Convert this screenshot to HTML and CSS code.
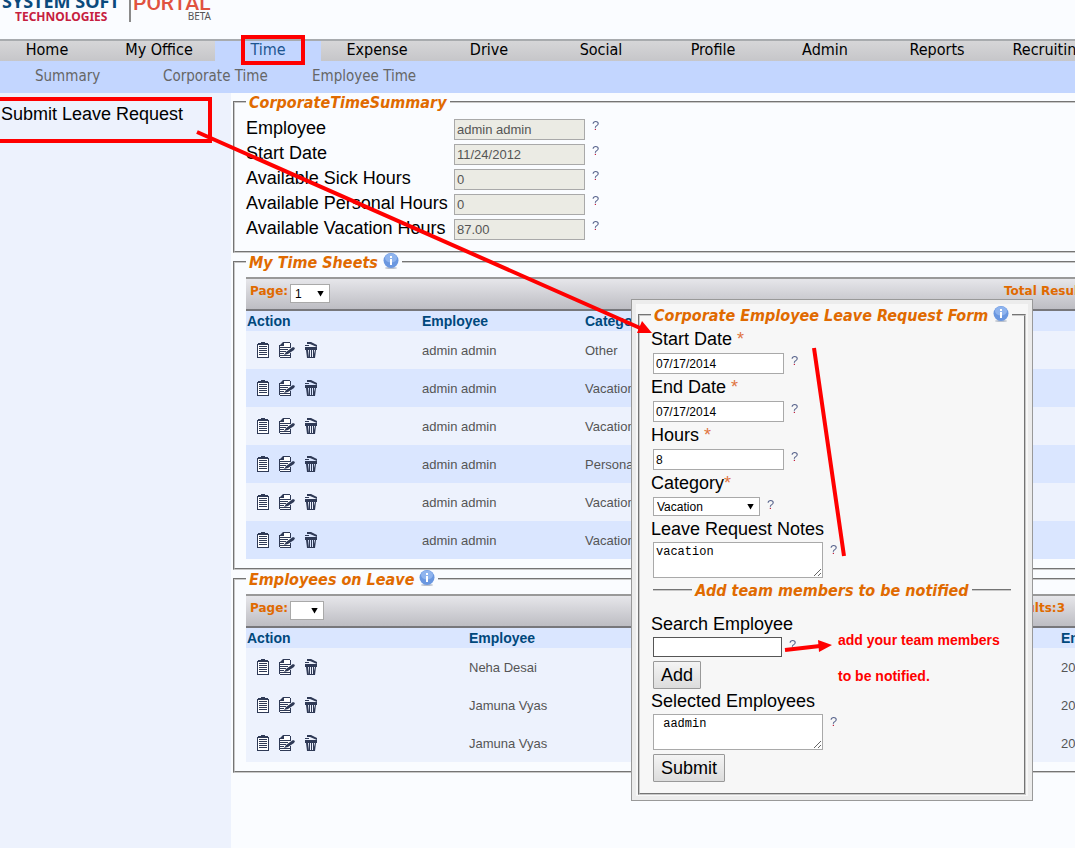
FILE: index.html
```html
<!DOCTYPE html>
<html lang="en">
<head>
<meta charset="utf-8">
<title>System Soft Technologies Portal</title>
<link rel="stylesheet" href="styles.css">
</head>
<body>
<svg class="sprite" aria-hidden="true">
  <symbol id="clip" viewBox="0 0 12 16"><path fill="#fff" d="M1 3h10v12H1z"/><path d="M0 2h1v13H0zM11 2h1v13h-1zM0 15h12v1H0zM1 1h10v2H1zM4 0h4v2H4zM2 4h8v1H2zM2 6h8v1H2zM2 8h8v1H2zM2 10h8v1H2zM2 12h8v1H2z"/></symbol>
  <symbol id="edit" viewBox="0 0 16 16"><path fill="#fff" d="M3 1h8v14H1V4z"/><path d="M4 0h7v1H5v3H0V3h1zM11 1h1v5h-1zM0 5h11v1H0zM0 7h9v1H0zM0 9h7v1H0zM0 11h5v1H0zM0 13h11v1H0zM1 15h11v1H1zM11 11h1v4h-1zM0 3h1v12H0z"/><path d="M5 13l2-3 7-5 2 1-1 2-6 4z"/></symbol>
  <symbol id="trash" viewBox="0 0 12 16"><path d="M2 0h4l6 3v2L5 2H2zM0 5h12v3H0zM0 3h4v1H0zM1 8h2l1 8H2zM4 8h1v7H4zM6 8h1v7H6zM8 8h1v7H8zM10 8h1l-1 8H8zM2 15h8v1H2z"/></symbol>
  <symbol id="info" viewBox="0 0 16 16"><ellipse cx="8" cy="15" rx="6" ry="1" fill="#b9c0cc"/><circle cx="8" cy="7.500" r="7.500" fill="#6a97e0"/><ellipse cx="8" cy="5" rx="6" ry="4.500" fill="#8fb4ee"/><path fill="#fff" d="M7 3h2v2H7zM7 6h2v6H7z"/></symbol>
</svg>
<div class="page">
  <header class="masthead">
    <div class="brand"><span class="brand-name">SYSTEM SOFT</span><span class="brand-sub">TECHNOLOGIES</span></div>
    <div class="portal"><span class="portal-name">PORTAL</span><span class="portal-tag">BETA</span></div>
  </header>
  <nav class="nav">
    <a class="nav-item first" href="#">Home</a>
    <a class="nav-item" href="#">My Office</a>
    <a class="nav-item current" href="#">Time</a>
    <a class="nav-item" href="#">Expense</a>
    <a class="nav-item" href="#">Drive</a>
    <a class="nav-item" href="#">Social</a>
    <a class="nav-item" href="#">Profile</a>
    <a class="nav-item" href="#">Admin</a>
    <a class="nav-item" href="#">Reports</a>
    <a class="nav-item" href="#">Recruiting</a>
  </nav>
  <nav class="subnav"><a href="#">Summary</a><a href="#">Corporate Time</a><a href="#">Employee Time</a></nav>

  <div class="columns">
    <aside class="sidebar"><a href="#">Submit Leave Request</a></aside>
    <main class="content">
      <fieldset class="panel summary">
        <legend>CorporateTimeSummary</legend>
        <div class="row"><label for="emp">Employee</label><input id="emp" type="text" value="admin admin" disabled><span class="help">?</span></div>
        <div class="row"><label for="sd">Start Date</label><input id="sd" type="text" value="11/24/2012" disabled><span class="help">?</span></div>
        <div class="row"><label for="sick">Available Sick Hours</label><input id="sick" type="text" value="0" disabled><span class="help">?</span></div>
        <div class="row"><label for="pers">Available Personal Hours</label><input id="pers" type="text" value="0" disabled><span class="help">?</span></div>
        <div class="row"><label for="vac">Available Vacation Hours</label><input id="vac" type="text" value="87.00" disabled><span class="help">?</span></div>
      </fieldset>

      <fieldset class="panel">
        <legend>My Time Sheets <svg class="info"><use href="#info"/></svg></legend>
        <div class="toolbar"><label for="p1">Page:</label><span class="select pager"><select id="p1"><option>1</option></select></span><span class="total">Total Results:6</span></div>
        <table class="grid sheets">
          <thead><tr><th class="act">Action</th><th class="who">Employee</th><th>Category</th></tr></thead>
          <tbody>
            <tr><td><span class="icons"><button aria-label="View"><svg class="narrow"><use href="#clip"/></svg></button><button aria-label="Edit"><svg class="wide"><use href="#edit"/></svg></button><button aria-label="Delete"><svg class="narrow"><use href="#trash"/></svg></button></span></td><td>admin admin</td><td>Other</td></tr>
            <tr><td><span class="icons"><button aria-label="View"><svg class="narrow"><use href="#clip"/></svg></button><button aria-label="Edit"><svg class="wide"><use href="#edit"/></svg></button><button aria-label="Delete"><svg class="narrow"><use href="#trash"/></svg></button></span></td><td>admin admin</td><td>Vacation</td></tr>
            <tr><td><span class="icons"><button aria-label="View"><svg class="narrow"><use href="#clip"/></svg></button><button aria-label="Edit"><svg class="wide"><use href="#edit"/></svg></button><button aria-label="Delete"><svg class="narrow"><use href="#trash"/></svg></button></span></td><td>admin admin</td><td>Vacation</td></tr>
            <tr><td><span class="icons"><button aria-label="View"><svg class="narrow"><use href="#clip"/></svg></button><button aria-label="Edit"><svg class="wide"><use href="#edit"/></svg></button><button aria-label="Delete"><svg class="narrow"><use href="#trash"/></svg></button></span></td><td>admin admin</td><td>Personal</td></tr>
            <tr><td><span class="icons"><button aria-label="View"><svg class="narrow"><use href="#clip"/></svg></button><button aria-label="Edit"><svg class="wide"><use href="#edit"/></svg></button><button aria-label="Delete"><svg class="narrow"><use href="#trash"/></svg></button></span></td><td>admin admin</td><td>Vacation</td></tr>
            <tr><td><span class="icons"><button aria-label="View"><svg class="narrow"><use href="#clip"/></svg></button><button aria-label="Edit"><svg class="wide"><use href="#edit"/></svg></button><button aria-label="Delete"><svg class="narrow"><use href="#trash"/></svg></button></span></td><td>admin admin</td><td>Vacation</td></tr>
          </tbody>
        </table>
      </fieldset>

      <fieldset class="panel">
        <legend>Employees on Leave <svg class="info"><use href="#info"/></svg></legend>
        <div class="toolbar leave-bar"><label for="p2">Page:</label><span class="select pager small"><select id="p2"><option></option></select></span><span class="total">Total Results:3</span></div>
        <table class="grid leave">
          <thead><tr><th class="act">Action</th><th>Employee</th><th class="end">End</th></tr></thead>
          <tbody>
            <tr><td><span class="icons"><button aria-label="View"><svg class="narrow"><use href="#clip"/></svg></button><button aria-label="Edit"><svg class="wide"><use href="#edit"/></svg></button><button aria-label="Delete"><svg class="narrow"><use href="#trash"/></svg></button></span></td><td>Neha Desai</td><td>2014</td></tr>
            <tr><td><span class="icons"><button aria-label="View"><svg class="narrow"><use href="#clip"/></svg></button><button aria-label="Edit"><svg class="wide"><use href="#edit"/></svg></button><button aria-label="Delete"><svg class="narrow"><use href="#trash"/></svg></button></span></td><td>Jamuna Vyas</td><td>2014</td></tr>
            <tr><td><span class="icons"><button aria-label="View"><svg class="narrow"><use href="#clip"/></svg></button><button aria-label="Edit"><svg class="wide"><use href="#edit"/></svg></button><button aria-label="Delete"><svg class="narrow"><use href="#trash"/></svg></button></span></td><td>Jamuna Vyas</td><td>2014</td></tr>
          </tbody>
        </table>
      </fieldset>
    </main>
  </div>

  <form class="dialog">
    <fieldset class="panel request">
      <legend>Corporate Employee Leave Request Form <svg class="info"><use href="#info"/></svg></legend>
      <label for="f1">Start Date <span class="req">*</span></label>
      <div class="field"><input id="f1" type="text" value="07/17/2014"><span class="help">?</span></div>
      <label for="f2">End Date <span class="req">*</span></label>
      <div class="field"><input id="f2" type="text" value="07/17/2014"><span class="help">?</span></div>
      <label for="f3">Hours <span class="req">*</span></label>
      <div class="field"><input id="f3" type="text" value="8"><span class="help">?</span></div>
      <label for="f4">Category<span class="req">*</span></label>
      <div class="field"><span class="select category"><select id="f4"><option>Vacation</option></select></span><span class="help">?</span></div>
      <label for="f5">Leave Request Notes</label>
      <div class="field tight"><textarea id="f5">vacation</textarea><span class="help">?</span></div>
      <fieldset class="team">
        <legend>Add team members to be notified</legend>
      </fieldset>
      <label for="f6">Search Employee</label>
      <div class="field tight"><input id="f6" class="search" type="text"><span class="help">?</span></div>
      <div class="field tight"><button class="btn" type="button">Add</button></div>
      <label for="f7">Selected Employees</label>
      <div class="field tight"><textarea id="f7"> aadmin</textarea><span class="help">?</span></div>
      <div class="field tight"><button class="btn" type="button">Submit</button></div>
    </fieldset>
  </form>

  <svg class="marks" width="1075" height="848" aria-hidden="true">
    <g fill="none" stroke="#f00" stroke-width="4">
      <rect x="243" y="37" width="60" height="26"/>
      <rect x="-6" y="99" width="216" height="42"/>
      <path d="M197 132L640 328M814 348L844 556M785 650L820 646"/>
    </g>
    <path fill="#f00" d="M652 333L637 333L642 321zM832 645L819 652L818 640z"/>
  </svg>
  <p class="note">add your team members<br>to be notified.</p>
</div>
</body>
</html>
```
FILE: styles.css
```css
* { box-sizing: border-box; }
body {
  margin: 0;
  background: #fafcff;
  color: #000;
  font-family: "Liberation Sans", Arial, sans-serif;
  font-size: 13px;
}
a { color: inherit; text-decoration: none; }
.sprite { display: none; }
.page {
  position: relative;
  display: flex;
  flex-direction: column;
  min-height: 100vh;
  overflow: hidden;
}

/* Masthead */
.masthead {
  display: flex;
  align-items: flex-start;
  height: 39px;
  overflow: hidden;
  font-family: "Noto Sans", sans-serif;
}
.brand, .portal {
  display: flex;
  flex-direction: column;
  flex: none;
  justify-content: flex-end;
  white-space: nowrap;
}
.brand { width: 129px; height: 25px; padding-left: 2px; }
.brand-name { color: #0b4a7c; font-size: 18px; font-weight: bold; line-height: 14px; }
.brand-sub { color: #c6203e; font-size: 12px; font-weight: bold; line-height: 17px; padding-left: 13px; }
.portal { width: 82px; height: 22px; border-left: 2px solid #8a8a8a; padding-left: 2px; }
.portal-name { color: #e0523f; font-family: Roboto, sans-serif; font-size: 21px; font-weight: 500; line-height: 16px; }
.portal-tag { color: #555; font-size: 10px; line-height: 11px; text-align: right; }

/* Navigation */
.nav {
  display: flex;
  height: 22px;
  overflow: hidden;
  border-top: 2px solid #a8abae;
  background: linear-gradient(#d6d6d8, #c6c6c9);
  font-family: "DejaVu Sans Condensed", Tahoma, sans-serif;
  font-size: 16px;
  line-height: 18px;
}
.nav-item { flex: none; width: 112px; height: 20px; text-align: center; }
.nav-item.first { width: 103px; padding-right: 9px; }
.nav-item.current { width: 106px; background: #c3d6ff; color: #1d5590; }
.subnav {
  display: grid;
  grid-template-columns: 128px 149px 1fr;
  height: 32px;
  padding-left: 35px;
  background: #c3d6ff;
  color: #666;
  font-family: "DejaVu Sans Condensed", Tahoma, sans-serif;
  font-size: 15px;
  line-height: 30px;
}

/* Columns */
.columns { display: flex; flex: 1; }
.sidebar {
  flex: none;
  width: 231px;
  padding: 10px 1px;
  background: #edf2fd;
  font-size: 18px;
  line-height: 22px;
}
.content { flex: 1; min-width: 0; padding-left: 2px; overflow: hidden; }

/* Panels */
.panel {
  min-width: 0;
  margin: 0 -20px 0 0;
  padding: 6px 11px 9px;
  border: 2px groove #c8c8c8;
}
.panel legend, .team legend {
  padding: 0 3px;
  color: #e06a00;
  font-family: "DejaVu Sans Condensed", Tahoma, sans-serif;
  font-size: 16px;
  font-style: italic;
  font-weight: bold;
  line-height: 20px;
  height: 18px;
  white-space: nowrap;
}
.info { width: 16px; height: 16px; vertical-align: top; }
.summary { padding: 5px 11px 10px; }
.row {
  display: grid;
  grid-template-columns: 208px 131px 1fr;
  align-items: end;
  height: 25px;
  padding-bottom: 1px;
}
.row label { font-size: 18px; line-height: 24px; }
.help {
  align-self: start;
  margin-left: 7px;
  background: linear-gradient(#55618a 11px, #c6203e 11px);
  background-clip: text;
  color: transparent;
  font-size: 13px;
  line-height: 16px;
}
.row .help { margin-top: 2px; }

input, textarea {
  margin: 0;
  border: 1px solid #a9a9a9;
  border-radius: 0;
  background: #fff;
  color: #000;
}
input {
  width: 131px;
  height: 21px;
  padding: 1px 2px;
  font-family: inherit;
  font-size: 12px;
}
input:disabled { background: #ebebe4; color: #555; font-size: 13px; }

/* Toolbars and tables */
.toolbar {
  display: flex;
  height: 34px;
  padding: 5px 63px 0 4px;
  border-top: 2px solid #999;
  border-bottom: 2px solid #77777b;
  background: linear-gradient(#e6e6ea, #bdbdc3);
  color: #e06a00;
  font-family: "DejaVu Sans", Verdana, sans-serif;
  font-size: 12px;
  font-weight: bold;
  line-height: 15px;
}
.toolbar label { width: 40px; }
.toolbar .total { margin-left: auto; width: 15px; white-space: nowrap; }
.toolbar.leave-bar .total { width: auto; }
.toolbar.leave-bar { padding-right: 17px; }
.select { display: inline-grid; align-items: center; height: 19px; }
.select select {
  grid-area: 1 / 1;
  width: 100%;
  height: 19px;
  margin: 0;
  padding: 0 4px;
  appearance: none;
  border: 1px solid #a9a9a9;
  border-radius: 0;
  background: #fff;
  color: #000;
  font-family: "Liberation Sans", Arial, sans-serif;
  font-size: 12px;
}
.select::after {
  content: "";
  grid-area: 1 / 1;
  justify-self: end;
  z-index: 1;
  width: 7px;
  height: 6px;
  margin-right: 6px;
  background: #000;
  clip-path: polygon(0 0, 100% 0, 50% 100%);
  pointer-events: none;
}
.pager { width: 40px; }
.pager.small { width: 34px; }
.grid { width: 100%; border-collapse: collapse; table-layout: fixed; }
.grid th {
  height: 20px;
  padding: 0 1px;
  background: #dae6ff;
  color: #00487c;
  font-size: 14px;
  line-height: 20px;
  text-align: left;
}
.grid td { height: 38px; padding: 0 1px; background: #edf2fd; color: #555; white-space: nowrap; }
.sheets tbody tr:nth-child(even) td { background: #dae6ff; }
.sheets .act { width: 175px; }
.sheets .who { width: 163px; }
.leave .act { width: 222px; }
.leave .end { width: 22px; }
.icons { display: flex; gap: 10px; padding-left: 10px; }
.icons button { display: block; padding: 0; border: 0; background: none; }
.icons svg { display: block; height: 16px; fill: #2f3a56; }
.narrow { width: 12px; }
.wide { width: 16px; }

/* Leave request dialog */
.dialog {
  position: absolute;
  left: 631px;
  top: 299px;
  width: 402px;
  padding: 6px 6px 5px;
  border: 1px solid #999;
  background: #f7f7f7;
  box-shadow: inset 0 0 0 4px #ececec;
}
.request { margin: 0; padding: 5px 11px 9px; }
.request > label { display: block; font-size: 18px; line-height: 21px; height: 21px; }
.req { color: #e0743f; font-size: 18px; line-height: 18px; }
.field { display: flex; padding: 3px 2px; }
.field.tight { padding: 2px; }
.category { width: 107px; }
.category select { padding: 0 3px; }
.field textarea {
  width: 170px;
  height: 36px;
  padding: 2px;
  font-family: "Liberation Mono", "Courier New", monospace;
  font-size: 12px;
}
.team {
  margin: 1px 2px 15px;
  padding: 0;
  border: 0 solid #777;
  border-top: 2px groove #c8c8c8;
}
.team legend { margin: 0 auto; }
.search { width: 129px; height: 20px; border-color: #555; }
.btn {
  height: 28px;
  padding: 0 7px;
  border: 1px solid #999;
  border-radius: 1px;
  background: linear-gradient(#f4f4f4, #dcdcdc);
  color: #000;
  font-family: inherit;
  font-size: 18px;
}

/* Call-outs drawn over the page */
.marks { position: absolute; left: 0; top: 0; pointer-events: none; }
.note {
  position: absolute;
  left: 838px;
  top: 622px;
  margin: 0;
  color: #f00;
  font-size: 14px;
  font-weight: bold;
  line-height: 36px;
}
```
